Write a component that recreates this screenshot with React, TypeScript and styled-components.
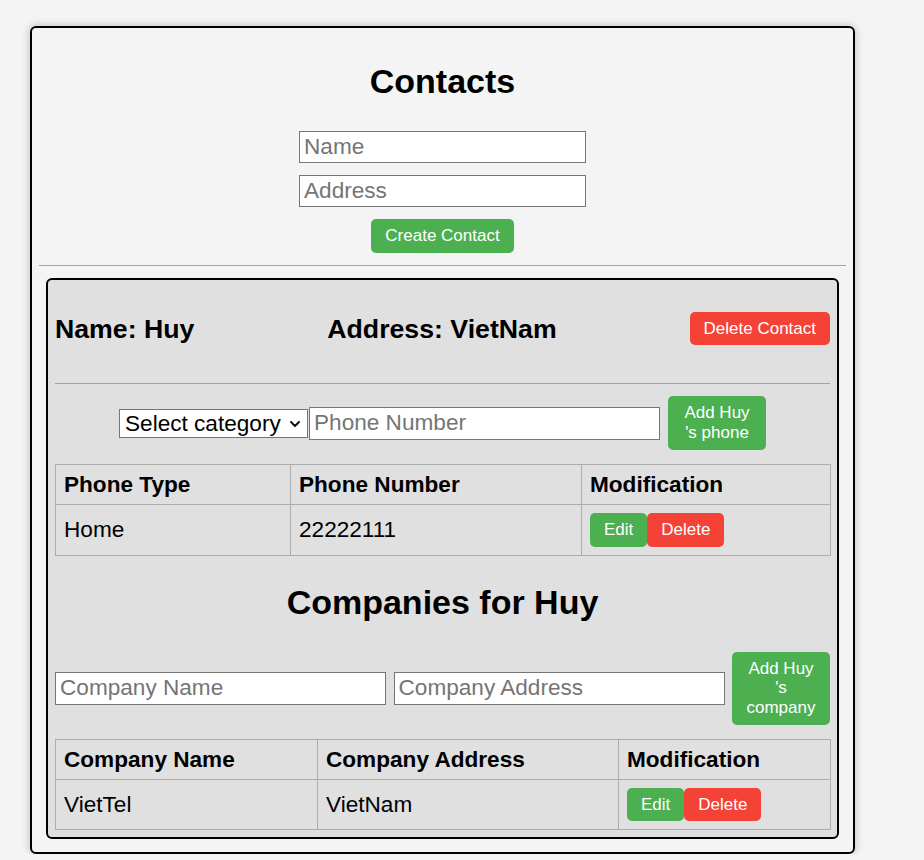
import React from "react";
import styled, { createGlobalStyle } from "styled-components";

const GlobalStyle = createGlobalStyle`
  html, body {
    margin: 0;
    padding: 0;
    background: #f4f4f4;
    font-family: "Liberation Sans", Arial, sans-serif;
    color: #000;
  }
  * { box-sizing: border-box; }
`;

const Page = styled.div`
  padding: 26px 0 0 30px;
`;

const Card = styled.div`
  width: 825px;
  background: #f4f4f4;
  border: 2px solid #000;
  border-radius: 6px;
  box-shadow: 0 0 8px rgba(0, 0, 0, 0.25);
  padding: 0 7px 13px;
`;

const Title = styled.h1`
  margin: 34px 0 30px;
  font-size: 34px;
  line-height: 39px;
  font-weight: 700;
  text-align: center;
`;

const CreateForm = styled.div`
  display: flex;
  flex-direction: column;
  align-items: center;
  gap: 12px;
`;

const TextInput = styled.input<{ $w?: number; $h?: number }>`
  width: ${(p) => (p.$w ? `${p.$w}px` : "auto")};
  height: ${(p) => p.$h ?? 33}px;
  border: 1px solid #767676;
  border-radius: 0;
  background: #fff;
  padding: 0 4px;
  font-family: "Liberation Sans", Arial, sans-serif;
  font-size: 22.6px;
  color: #000;
  outline: none;
  &::placeholder {
    color: #757575;
  }
`;

const FlexInput = styled(TextInput)`
  flex: 1;
  min-width: 0;
`;

const Button = styled.button<{ $variant?: "green" | "red"; $w?: number }>`
  background: ${(p) => (p.$variant === "red" ? "#f44336" : "#4caf50")};
  color: #fff;
  border: none;
  border-radius: 5px;
  padding: 7px 14px;
  font-family: "Liberation Sans", Arial, sans-serif;
  font-size: 17px;
  line-height: 19.7px;
  cursor: pointer;
  flex-shrink: 0;
  width: ${(p) => (p.$w ? `${p.$w}px` : "auto")};
  text-align: center;
`;

const Divider = styled.hr`
  border: none;
  border-top: 1px solid #a3a3a3;
  height: 0;
  margin: 12px 0;
`;

const ContactCard = styled.div`
  margin: 0 7px;
  background: #e0e0e0;
  border: 2px solid #000;
  border-radius: 6px;
  padding: 0 7px 7px;
`;

const ContactHeader = styled.div`
  display: flex;
  justify-content: space-between;
  align-items: center;
  padding: 32px 0 38px;
`;

const ContactField = styled.h3`
  margin: 0;
  font-size: 26.7px;
  line-height: 30px;
  font-weight: 700;
`;

const InnerDivider = styled.hr`
  border: none;
  border-top: 1px solid #a3a3a3;
  height: 0;
  margin: 0;
`;

const PhoneRow = styled.div`
  display: flex;
  justify-content: center;
  align-items: center;
  margin: 12px 0 14px;
`;

const SelectWrap = styled.span`
  position: relative;
  display: inline-flex;
  margin-right: 1px;
`;

const Select = styled.select`
  appearance: none;
  -webkit-appearance: none;
  width: 189px;
  height: 29px;
  border: 1px solid #767676;
  border-radius: 0;
  background: #fff;
  font-family: "Liberation Sans", Arial, sans-serif;
  font-size: 22.6px;
  color: #000;
  padding: 0 24px 0 5px;
  outline: none;
`;

const Chevron = styled.svg`
  position: absolute;
  right: 8px;
  top: 12px;
  width: 10px;
  height: 6px;
  pointer-events: none;
`;

const PhoneInput = styled(TextInput)`
  margin-right: 8px;
`;

const Table = styled.table`
  width: 100%;
  border-collapse: collapse;
  table-layout: fixed;
`;

const Th = styled.th<{ $w: number }>`
  width: ${(p) => p.$w}px;
  border: 1px solid #adadad;
  padding: 7px 8px;
  font-size: 22.6px;
  line-height: 25px;
  font-weight: 700;
  text-align: left;
`;

const Td = styled.td`
  border: 1px solid #adadad;
  padding: 8px;
  font-size: 22.6px;
  line-height: 25px;
  vertical-align: middle;
`;

const Actions = styled.div`
  display: flex;
  align-items: center;
`;

const SectionTitle = styled.h2`
  margin: 27px 0 30px;
  font-size: 34px;
  line-height: 39px;
  font-weight: 700;
  text-align: center;
`;

const CompanyRow = styled.div`
  display: flex;
  align-items: center;
  gap: 7.5px;
  margin-bottom: 14px;
`;

export default function App() {
  return (
    <>
      <GlobalStyle />
      <Page>
        <Card>
          <Title>Contacts</Title>
          <CreateForm>
            <TextInput $w={287} $h={32} placeholder="Name" />
            <TextInput $w={287} $h={32} placeholder="Address" />
            <Button $variant="green">Create Contact</Button>
          </CreateForm>
          <Divider />
          <ContactCard>
            <ContactHeader>
              <ContactField>Name: Huy</ContactField>
              <ContactField>Address: VietNam</ContactField>
              <Button $variant="red">Delete Contact</Button>
            </ContactHeader>
            <InnerDivider />
            <PhoneRow>
              <SelectWrap>
                <Select defaultValue="">
                  <option value="">Select category</option>
                  <option value="home">Home</option>
                  <option value="work">Work</option>
                </Select>
                <Chevron viewBox="0 0 10 6">
                  <path
                    d="M1 1 L5 5 L9 1"
                    fill="none"
                    stroke="#000"
                    strokeWidth="1.8"
                    strokeLinecap="round"
                    strokeLinejoin="round"
                  />
                </Chevron>
              </SelectWrap>
              <PhoneInput $w={351} placeholder="Phone Number" />
              <Button $variant="green" $w={98}>
                Add Huy 's phone
              </Button>
            </PhoneRow>
            <Table>
              <thead>
                <tr>
                  <Th $w={235}>Phone Type</Th>
                  <Th $w={291}>Phone Number</Th>
                  <Th $w={249}>Modification</Th>
                </tr>
              </thead>
              <tbody>
                <tr>
                  <Td>Home</Td>
                  <Td>22222111</Td>
                  <Td>
                    <Actions>
                      <Button $variant="green">Edit</Button>
                      <Button $variant="red">Delete</Button>
                    </Actions>
                  </Td>
                </tr>
              </tbody>
            </Table>
            <SectionTitle>Companies for Huy</SectionTitle>
            <CompanyRow>
              <FlexInput placeholder="Company Name" />
              <FlexInput placeholder="Company Address" />
              <Button $variant="green" $w={98}>
                Add Huy 's company
              </Button>
            </CompanyRow>
            <Table>
              <thead>
                <tr>
                  <Th $w={262}>Company Name</Th>
                  <Th $w={301}>Company Address</Th>
                  <Th $w={212}>Modification</Th>
                </tr>
              </thead>
              <tbody>
                <tr>
                  <Td>VietTel</Td>
                  <Td>VietNam</Td>
                  <Td>
                    <Actions>
                      <Button $variant="green">Edit</Button>
                      <Button $variant="red">Delete</Button>
                    </Actions>
                  </Td>
                </tr>
              </tbody>
            </Table>
          </ContactCard>
        </Card>
      </Page>
    </>
  );
}
